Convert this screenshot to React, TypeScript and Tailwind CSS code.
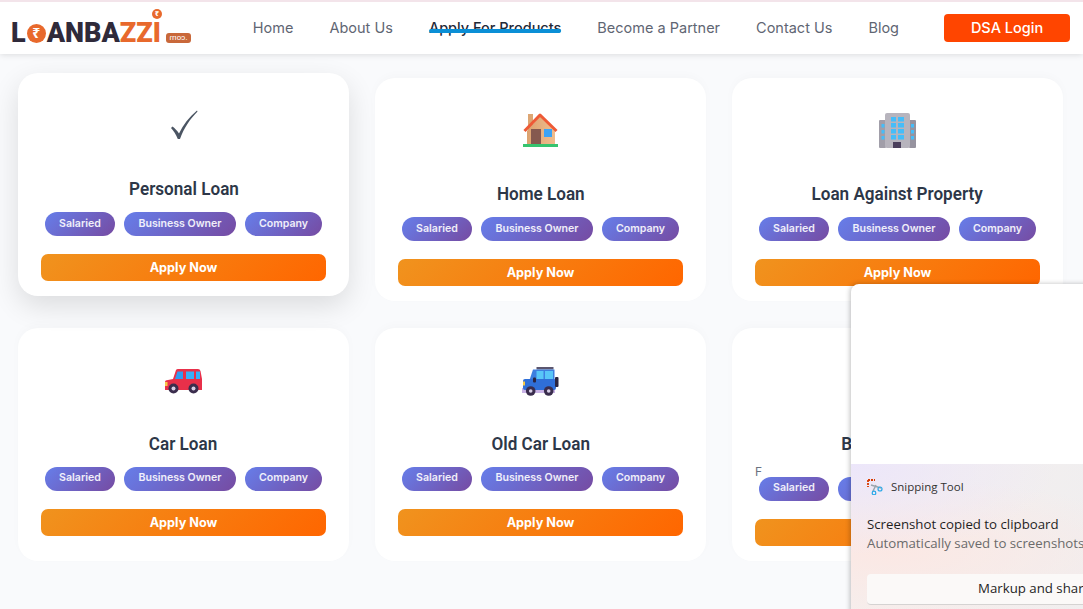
const cardClass = "bg-white rounded-[20px] px-[23px] pt-[32px] pb-[15px] flex flex-col items-center";

function Check() {
    return (
        <svg width="30" height="30" viewBox="0 0 30 30">
            <path d="M2 18 L3.500 16.500 C5.500 18 8 20.500 10 23.500 C14 15 20 7 28 0.500 L28.500 1.500 C21 9 15 18 11 29 L8.800 29 C7 24.500 4.500 20.500 2 18 Z" fill="#4b5563" />
        </svg>
    );
}

function House() {
    return (
        <svg width="37" height="36" viewBox="0 0 37 36">
            <defs>
                <linearGradient id="wall" x1="0" y1="0" x2="1" y2="0">
                    <stop offset="0" stopColor="#dba26f" />
                    <stop offset="1" stopColor="#f0bd8e" />
                </linearGradient>
            </defs>
            <rect x="6" y="2" width="5" height="16" fill="#dda673" />
            <path d="M5 19 L18 4 L33 19 V32 H5 Z" fill="url(#wall)" />
            <path d="M2.500 19 L18 3 L34.500 19" fill="none" stroke="#ee5a36" strokeWidth="3" strokeLinejoin="round" />
            <rect x="9" y="17" width="10" height="15" fill="#85594f" />
            <rect x="22" y="17" width="8" height="8" fill="#3ba3f5" />
            <rect x="1" y="32" width="35" height="3" fill="#35c46f" />
        </svg>
    );
}

function Building() {
    const rows = [5, 11, 17, 23];
    return (
        <svg width="37" height="36" viewBox="0 0 37 36">
            <rect x="0" y="8" width="7" height="28" rx="1" fill="#a19ea9" />
            <rect x="30" y="8" width="7" height="28" rx="1" fill="#96939f" />
            <rect x="6" y="1" width="25" height="35" rx="2" fill="#b7b4bd" />
            {rows.map((y) => (
                <g key={y} fill="#45bdf9">
                    <rect x="12" y={y} width="5" height="4.500" />
                    <rect x="19" y={y} width="6" height="4.500" />
                </g>
            ))}
            <rect x="2.500" y="12" width="3" height="3.500" fill="#45bdf9" />
            <rect x="2.500" y="18" width="3" height="3.500" fill="#45bdf9" />
            <rect x="2.500" y="24" width="3" height="3.500" fill="#45bdf9" />
            <rect x="32" y="12" width="3" height="3.500" fill="#45bdf9" />
            <rect x="32" y="18" width="3" height="3.500" fill="#45bdf9" />
            <rect x="32" y="24" width="3" height="3.500" fill="#45bdf9" />
            <rect x="14" y="30" width="8" height="6" fill="#4a3f5c" />
        </svg>
    );
}

function Car() {
    return (
        <svg width="37" height="25" viewBox="0 0 37 25" className="mt-[4px]">
            <path d="M8 10 L11 1 Q11.500 0 13 0 H33 Q35 0 35.500 2 L37 10 V21 H0 V13 Q0 11 3 11 Z" fill="#e8304a" />
            <path d="M10 10 L12.500 2.500 H18 V10 Z" fill="#2f9bf0" />
            <rect x="21" y="2.500" width="8" height="7.500" fill="#38b0f8" />
            <rect x="31" y="2.500" width="4" height="7.500" fill="#38b0f8" />
            <rect x="0" y="13" width="2.500" height="4" fill="#f7c948" />
            <circle cx="8.500" cy="19.500" r="5" fill="#3a2d4d" />
            <circle cx="8.500" cy="19.500" r="2" fill="#d8cfe6" />
            <circle cx="28.500" cy="19.500" r="5" fill="#3a2d4d" />
            <circle cx="28.500" cy="19.500" r="2" fill="#d8cfe6" />
        </svg>
    );
}

function Jeep() {
    return (
        <svg width="37" height="31" viewBox="0 0 37 31" className="mt-[3px]">
            <rect x="0" y="22" width="33" height="5" fill="#c9b3e6" />
            <rect x="14.500" y="1" width="17" height="2.500" fill="#5b5670" />
            <path d="M7.500 14 L11 3.500 H32.500 V14 Z" fill="#3d7fe0" />
            <rect x="14.500" y="5" width="7" height="8.500" fill="#58c6f8" />
            <rect x="23" y="5" width="8" height="8.500" fill="#58c6f8" />
            <rect x="1" y="13" width="33" height="11" rx="2" fill="#2f6fd8" />
            <rect x="11" y="11.500" width="3" height="5" rx="1" fill="#2b2540" />
            <rect x="33" y="11" width="3.500" height="10" rx="1" fill="#2b2540" />
            <rect x="1" y="15.500" width="2" height="4" fill="#f7c948" />
            <circle cx="8.700" cy="25" r="4.800" fill="#3a2d4d" />
            <circle cx="8.700" cy="25" r="1.800" fill="#d8cfe6" />
            <circle cx="26.700" cy="25" r="4.800" fill="#3a2d4d" />
            <circle cx="26.700" cy="25" r="1.800" fill="#d8cfe6" />
        </svg>
    );
}

function SnipIcon() {
    return (
        <svg width="16" height="16" viewBox="0 0 16 16" fill="none">
            <path d="M1 1 H8 M1 1 V8" stroke="#d83b01" strokeWidth="1.800" strokeDasharray="2 1" />
            <path d="M4 6 L14 9 M6 12 L9 6" stroke="#9aa5ad" strokeWidth="1.500" />
            <circle cx="13" cy="10" r="2" stroke="#29a8e8" strokeWidth="1.200" />
            <circle cx="7" cy="14" r="1.800" stroke="#29a8e8" strokeWidth="1.200" />
        </svg>
    );
}

function Tags() {
    return (
        <div className="flex gap-[9px] self-center">
            <span className="h-[24px] w-[70px] pb-[1px] flex items-center justify-center rounded-full bg-[linear-gradient(135deg,#667eea,#764ba2)] text-white/90 text-[10.600px] font-semibold">Salaried</span>
            <span className="h-[24px] w-[112px] pb-[1px] flex items-center justify-center rounded-full bg-[linear-gradient(135deg,#667eea,#764ba2)] text-white/90 text-[10.600px] font-semibold">Business Owner</span>
            <span className="h-[24px] w-[77px] pb-[1px] flex items-center justify-center rounded-full bg-[linear-gradient(135deg,#667eea,#764ba2)] text-white/90 text-[10.600px] font-semibold">Company</span>
        </div>
    );
}

function LoanCard({ title, icon, extra, raised }: { title: string; icon: React.ReactNode; extra?: string; raised?: boolean }) {
    return (
        <div className={raised ? cardClass + " -translate-y-[5px] shadow-[0_10px_28px_rgba(0,0,0,0.12)]" : cardClass + " shadow-[0_-3px_10px_rgba(0,0,0,0.02)]"}>
            <div className="h-[40px] flex items-center justify-center">{icon}</div>
            <h3 className="mt-[32px] h-[24px] leading-[24px] text-[19px] font-semibold whitespace-nowrap scale-x-[0.9] text-[#2d3748] font-['Roboto',sans-serif]">{title}</h3>
            {extra && <div className="self-start h-[10px] mt-[11px] -mb-[11px] leading-[10px] text-[12px] text-[#6b7280]">{extra}</div>}
            <div className="mt-[11px]">
                <Tags />
            </div>
            <button className="mt-[18px] w-[285px] h-[27px] rounded-[7px] bg-[linear-gradient(135deg,#f0931e,#ff6600)] text-white text-[12.700px] font-bold">Apply Now</button>
        </div>
    );
}

function Logo() {
    return (
        <div className="relative mt-[10px] flex items-center font-['Roboto',sans-serif] font-black text-[27px] leading-none text-[#2f2a3a]">
            <span>L</span>
            <span className="w-[19px] h-[19px] mx-[1px] rounded-full bg-[#e8692c] text-white text-[14px] font-bold flex items-center justify-center font-['Noto_Sans',sans-serif]">₹</span>
            <span>ANBA</span>
            <span className="text-[#e8692c]">ZZI</span>
            <span className="absolute right-[29px] -top-[11px] w-[10px] h-[10px] rounded-full bg-[#e8692c] text-white text-[7px] flex items-center justify-center font-['Noto_Sans',sans-serif]">₹</span>
            <span className="ml-[5px] mt-[9px] w-[25px] h-[10px] rounded-[3px] bg-[#c9683a] text-white text-[8px] font-normal leading-[10px] text-center -scale-x-100">.com</span>
        </div>
    );
}

export default function App() {
    return (
        <div className="relative h-[609px] overflow-hidden bg-[#f9fafc] font-['Inter',sans-serif]">
            <header className="h-[54px] bg-white border-t-2 border-[#f3e4ea] shadow-[0_1px_6px_rgba(0,0,0,0.12)] flex items-center pl-[11px] pr-[13px]">
                <Logo />
                <nav className="ml-auto flex items-center gap-[36px] text-[14.500px] text-[#5f6673]">
                    <a href="#">Home</a>
                    <a href="#">About Us</a>
                    <a href="#" className="relative font-medium text-[#1f2937]">
                        Apply For Products
                        <span className="absolute left-0 right-0 top-[12px] h-[4px] rounded-full bg-[#0a8fd6]" />
                    </a>
                    <a href="#">Become a Partner</a>
                    <a href="#">Contact Us</a>
                    <a href="#">Blog</a>
                    <a href="#" className="ml-[9px] w-[126px] h-[28px] rounded-[4px] bg-[#ff4500] text-white font-medium flex items-center justify-center">DSA Login</a>
                </nav>
            </header>

            <main className="grid grid-cols-[331px_331px_331px] gap-x-[26px] gap-y-[26.600px] px-[18px] pt-[24px]">
                <LoanCard title="Personal Loan" icon={<Check />} raised />
                <LoanCard title="Home Loan" icon={<House />} />
                <LoanCard title="Loan Against Property" icon={<Building />} />
                <LoanCard title="Car Loan" icon={<Car />} />
                <LoanCard title="Old Car Loan" icon={<Jeep />} />
                <LoanCard title="Business Loan" icon={<span />} extra="F" />
            </main>

            {/* snipping tool toast sits over the page, runs off the right edge */}
            <div className="absolute left-[851px] top-[284px] w-[367px] h-[340px] rounded-tl-[8px] bg-white shadow-[-1px_0_5px_rgba(0,0,0,0.25)]">
                <div className="h-[180px]" />
                <div className="h-[160px] px-[16px] pt-[14px] bg-[radial-gradient(ellipse_at_0%_0%,#ece6fa_0%,transparent_40%),radial-gradient(ellipse_at_10%_55%,#fbe8e4_0%,transparent_60%),linear-gradient(90deg,#f5efee,#eeeef0)]">
                    <div className="flex items-center gap-[8px] text-[11.500px] text-[#333] font-['Open_Sans',sans-serif]">
                        <SnipIcon />
                        <span>Snipping Tool</span>
                    </div>
                    <div className="mt-[20px] text-[13.250px] leading-[19px] text-[#1f1f1f] font-['Open_Sans',sans-serif]">Screenshot copied to clipboard</div>
                    <div className="text-[13.250px] leading-[19px] text-[#6b6b6b] font-['Open_Sans',sans-serif]">Automatically saved to screenshots folder</div>
                    <div className="mt-[21px] h-[31px] rounded-[4px] bg-[#fbf9f8] border-b border-[#d5d3d2] flex items-center justify-center text-[13.250px] text-[#1f1f1f] font-['Open_Sans',sans-serif]">Markup and share</div>
                </div>
            </div>
        </div>
    );
}
